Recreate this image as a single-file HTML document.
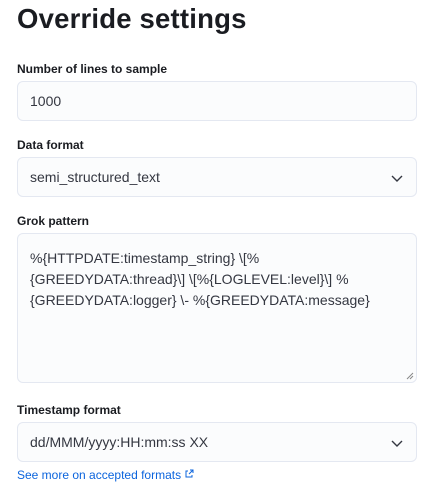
<!DOCTYPE html>
<html><head><style>
body{margin:0;background:#fff;font-family:"Liberation Sans",sans-serif;color:#1a1c21;width:421px;height:476px;overflow:hidden;position:relative}
.a{position:absolute}
h1{position:absolute;left:17px;top:3px;margin:0;font-size:27.5px;font-weight:bold;color:#1a1c21;letter-spacing:0.2px}
.l{position:absolute;left:17px;font-size:12px;font-weight:bold;color:#1a1c21}
.f{position:absolute;left:17px;width:398px;height:38px;border:1px solid #e4e8f1;border-radius:6px;background:#fbfcfd;font-size:14px;color:#343741;box-sizing:content-box}
.f span{position:absolute;left:12px;top:11px}
.chev{position:absolute;right:12px;top:13px}
</style></head><body>
<h1>Override settings</h1>
<div class="l" style="top:62px">Number of lines to sample</div>
<div class="f" style="top:81px"><span>1000</span></div>
<div class="l" style="top:138px">Data format</div>
<div class="f" style="top:157px"><span>semi_structured_text</span><svg class="chev" width="14" height="14" viewBox="0 0 14 14"><path d="M2 5l5 5 5-5" stroke="#343741" stroke-width="1.4" fill="none"/></svg></div>
<div class="l" style="top:214px">Grok pattern</div>
<div class="f" style="top:233px;height:148px"><div style="position:absolute;left:12px;top:14px;line-height:21px;width:380px">%{HTTPDATE:timestamp_string} \[%<br>{GREEDYDATA:thread}\] \[%{LOGLEVEL:level}\] %<br>{GREEDYDATA:logger} \- %{GREEDYDATA:message}</div>
<svg style="position:absolute;right:2px;bottom:2px" width="8" height="8"><path d="M7 1L1 7M7 4L4 7" stroke="#888" stroke-width="1"/></svg></div>
<div class="l" style="top:403px">Timestamp format</div>
<div class="f" style="top:422px"><span>dd/MMM/yyyy:HH:mm:ss XX</span><svg class="chev" width="14" height="14" viewBox="0 0 14 14"><path d="M2 5l5 5 5-5" stroke="#343741" stroke-width="1.4" fill="none"/></svg></div>
<div class="a" style="left:17px;top:468px;font-size:12px;color:#0b64dd">See more on accepted formats <svg width="10" height="10" viewBox="0 0 10 10"><path d="M4 2H2v6h6V6M6 1h3v3M9 1L5 5" stroke="#0b64dd" fill="none"/></svg></div>
</body></html>
